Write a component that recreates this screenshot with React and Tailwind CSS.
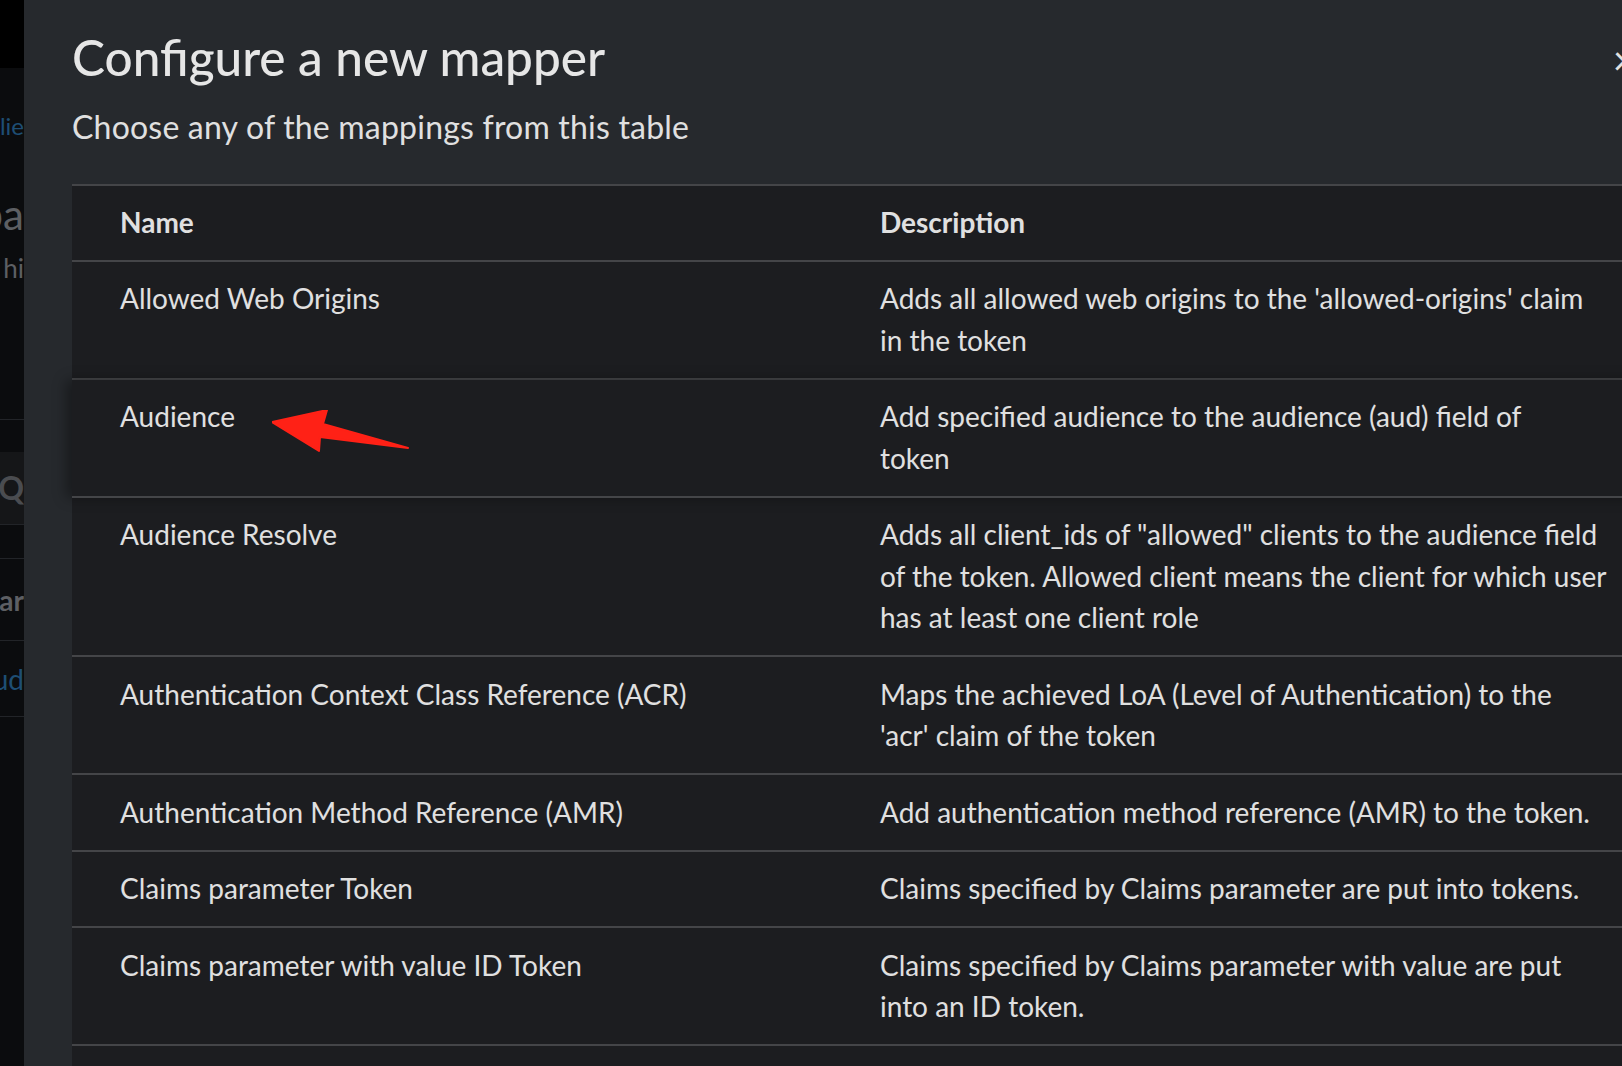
import React from "react";

const mappers = [
  {
    name: "Allowed Web Origins",
    desc: ["Adds all allowed web origins to the 'allowed-origins' claim", "in the token"],
  },
  {
    name: "Audience",
    desc: ["Add specified audience to the audience (aud) field of", "token"],
    hover: true,
  },
  {
    name: "Audience Resolve",
    desc: [
      'Adds all client_ids of "allowed" clients to the audience field',
      "of the token. Allowed client means the client for which user",
      "has at least one client role",
    ],
  },
  {
    name: "Authentication Context Class Reference (ACR)",
    desc: ["Maps the achieved LoA (Level of Authentication) to the", "'acr' claim of the token"],
  },
  {
    name: "Authentication Method Reference (AMR)",
    desc: ["Add authentication method reference (AMR) to the token."],
  },
  {
    name: "Claims parameter Token",
    desc: ["Claims specified by Claims parameter are put into tokens."],
  },
  {
    name: "Claims parameter with value ID Token",
    desc: ["Claims specified by Claims parameter with value are put", "into an ID token."],
  },
  {
    name: "Client Host",
    desc: ["Maps the client host to a token claim"],
  },
];

const font = { fontFamily: "Lato, 'Open Sans', sans-serif" };

const Arrow = () => (
  <svg className="absolute left-[200px] top-[14px]" width="140" height="45" viewBox="0 0 140 45">
    <polygon
      points="0,12 55,0 51,14 136,38 48,27 47,41"
      fill="#ff2116"
      stroke="#ff2116"
      strokeWidth="2"
      strokeLinejoin="round"
    />
  </svg>
);

// the page behind the dimmed overlay, only a sliver shows
const Backdrop = () => (
  <div className="w-[24px] shrink-0 overflow-hidden bg-[#0b0c0e] text-[#5d5f63]">
    <div className="h-[68px] bg-black" />
    <div className="mt-[42px] flex h-[32px] justify-end text-[24px] leading-[32px] text-[#1e4e74]">
      <span className="whitespace-nowrap">lie</span>
    </div>
    <div className="mt-[47px] flex h-[50px] justify-end text-[42px] leading-[50px]">
      <span className="whitespace-nowrap">pa</span>
    </div>
    <div className="mt-[13px] flex h-[32px] justify-end text-[26px] leading-[32px]">
      <span className="whitespace-nowrap">hi</span>
    </div>
    <div className="mt-[135px] border-t border-[#222428]" />
    <div className="mt-[32px] flex h-[72px] items-center justify-end bg-[#151618] text-[32px] font-bold text-[#4a4c50]">
      <span className="whitespace-nowrap">Q</span>
    </div>
    <div className="border-t border-[#222428]" />
    <div className="mt-[33px] border-t border-[#222428]" />
    <div className="flex h-[81px] items-center justify-end text-[28px] font-bold">
      <span className="whitespace-nowrap">ar</span>
    </div>
    <div className="border-t border-[#222428]" />
    <div className="flex h-[75px] items-center justify-end text-[28px] text-[#1e4e74]">
      <span className="whitespace-nowrap">ud</span>
    </div>
    <div className="border-t border-[#222428]" />
  </div>
);

export default function App() {
  return (
    <div className="flex h-[1066px] w-[1622px] overflow-hidden bg-black" style={font}>
      <Backdrop />

      {/* Modal */}
      <div className="relative flex-1 overflow-hidden bg-[#26292d] pl-[48px] text-[#e0e0e0]">
        <button className="absolute right-[-14px] top-[40px] text-[40px] leading-none text-[#e0e0e0]">×</button>

        <h1 className="mt-[28px] text-[49.5px] font-medium leading-[58px] text-[#e6e6e6]">
          Configure a new mapper
        </h1>
        <p className="mt-[21px] text-[32px] leading-[40px] tracking-[0.2px]">
          Choose any of the mappings from this table
        </p>

        {/* Table */}
        <div className="mt-[37px] w-[1600px] border-t-[2px] border-[#444548] bg-[#1c1d20] text-[28px] leading-[41.5px]">
          <div className="grid grid-cols-[760px_1fr] border-b-[2px] border-[#444548] py-[16px] font-bold">
            <div className="pl-[48px]">Name</div>
            <div className="pl-[48px]">Description</div>
          </div>
          {mappers.map((m) => (
            <div
              key={m.name}
              className={
                m.hover
                  ? "relative grid grid-cols-[760px_1fr] border-b-[2px] border-[#444548] py-[16.5px] shadow-[-6px_0_12px_rgba(0,0,0,0.35)]"
                  : "relative grid grid-cols-[760px_1fr] border-b-[2px] border-[#444548] py-[16.5px]"
              }
            >
              <div className="relative pl-[48px]">
                {m.name}
                {m.hover && <Arrow />}
              </div>
              <div className="pl-[48px]">
                {m.desc.map((line) => (
                  <div key={line} className="whitespace-nowrap">
                    {line}
                  </div>
                ))}
              </div>
            </div>
          ))}
        </div>
      </div>
    </div>
  );
}
